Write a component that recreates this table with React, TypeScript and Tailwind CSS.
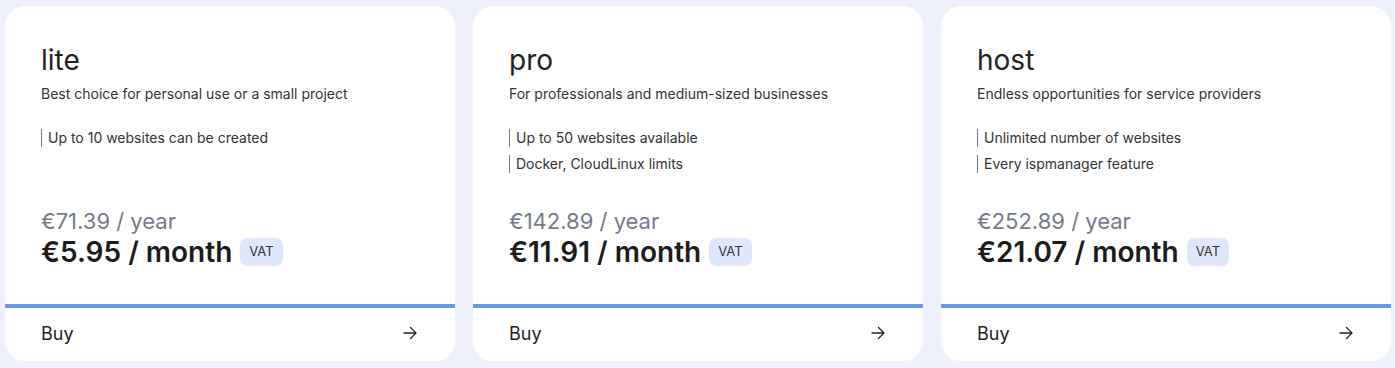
import React from "react";

type Plan = {
  name: string;
  desc: string;
  features: string[];
  year: string;
  month: string;
};

const plans: Plan[] = [
  {
    name: "lite",
    desc: "Best choice for personal use or a small project",
    features: ["Up to 10 websites can be created"],
    year: "€71.39 / year",
    month: "€5.95 / month",
  },
  {
    name: "pro",
    desc: "For professionals and medium-sized businesses",
    features: ["Up to 50 websites available", "Docker, CloudLinux limits"],
    year: "€142.89 / year",
    month: "€11.91 / month",
  },
  {
    name: "host",
    desc: "Endless opportunities for service providers",
    features: ["Unlimited number of websites", "Every ispmanager feature"],
    year: "€252.89 / year",
    month: "€21.07 / month",
  },
];

function Arrow() {
  return (
    <svg width="16" height="16" viewBox="0 0 16 16" fill="none" stroke="#222" strokeWidth="1.3" strokeLinecap="round" strokeLinejoin="round">
      <path d="M2 8h12M8.5 2.5L14 8l-5.5 5.5" />
    </svg>
  );
}

function Card({ p }: { p: Plan }) {
  return (
    <div className="flex h-[355px] w-[450px] flex-col overflow-hidden rounded-[20px] bg-white">
      <div className="flex flex-1 flex-col px-9 pt-[37px]">
        <div className="text-[28px] leading-[34px] text-[#222]">{p.name}</div>
        <div className="mt-[7px] text-[14px] leading-[20px] text-[#333]">{p.desc}</div>
        <div className="mt-[24px] flex flex-col gap-[6px]">
          {p.features.map((f) => (
            <div key={f} className="my-[1px] border-l border-[#6a7a95] pl-[6px] text-[14px] leading-[18px] text-[#333]">
              {f}
            </div>
          ))}
        </div>
        <div className="mt-auto pb-[35px]">
          <div className="text-[22px] leading-[28px] text-[#747b88]">{p.year}</div>
          <div className="flex items-center gap-[8px]">
            <span className="text-[28px] font-semibold leading-[34px] text-[#1c1c1c]">{p.month}</span>
            <span className="flex h-[28px] items-center rounded-[7px] bg-[#dfe7fb] px-[9px] text-[13px] text-[#333]">VAT</span>
          </div>
        </div>
      </div>
      <div className="h-[4px] bg-[#6b96e0]" />
      <div className="flex h-[53px] items-center justify-between pb-[3px] pl-9 pr-[37px]">
        <span className="text-[18px] text-[#222]">Buy</span>
        <Arrow />
      </div>
    </div>
  );
}

export default function App() {
  return (
    <div
      className="flex h-[368px] w-[1395px] gap-[18px] bg-[#eef1fc] pl-[5px] pt-[6px]"
      style={{ fontFamily: "Inter, 'Noto Sans', sans-serif" }}
    >
      {plans.map((p) => (
        <Card key={p.name} p={p} />
      ))}
    </div>
  );
}
